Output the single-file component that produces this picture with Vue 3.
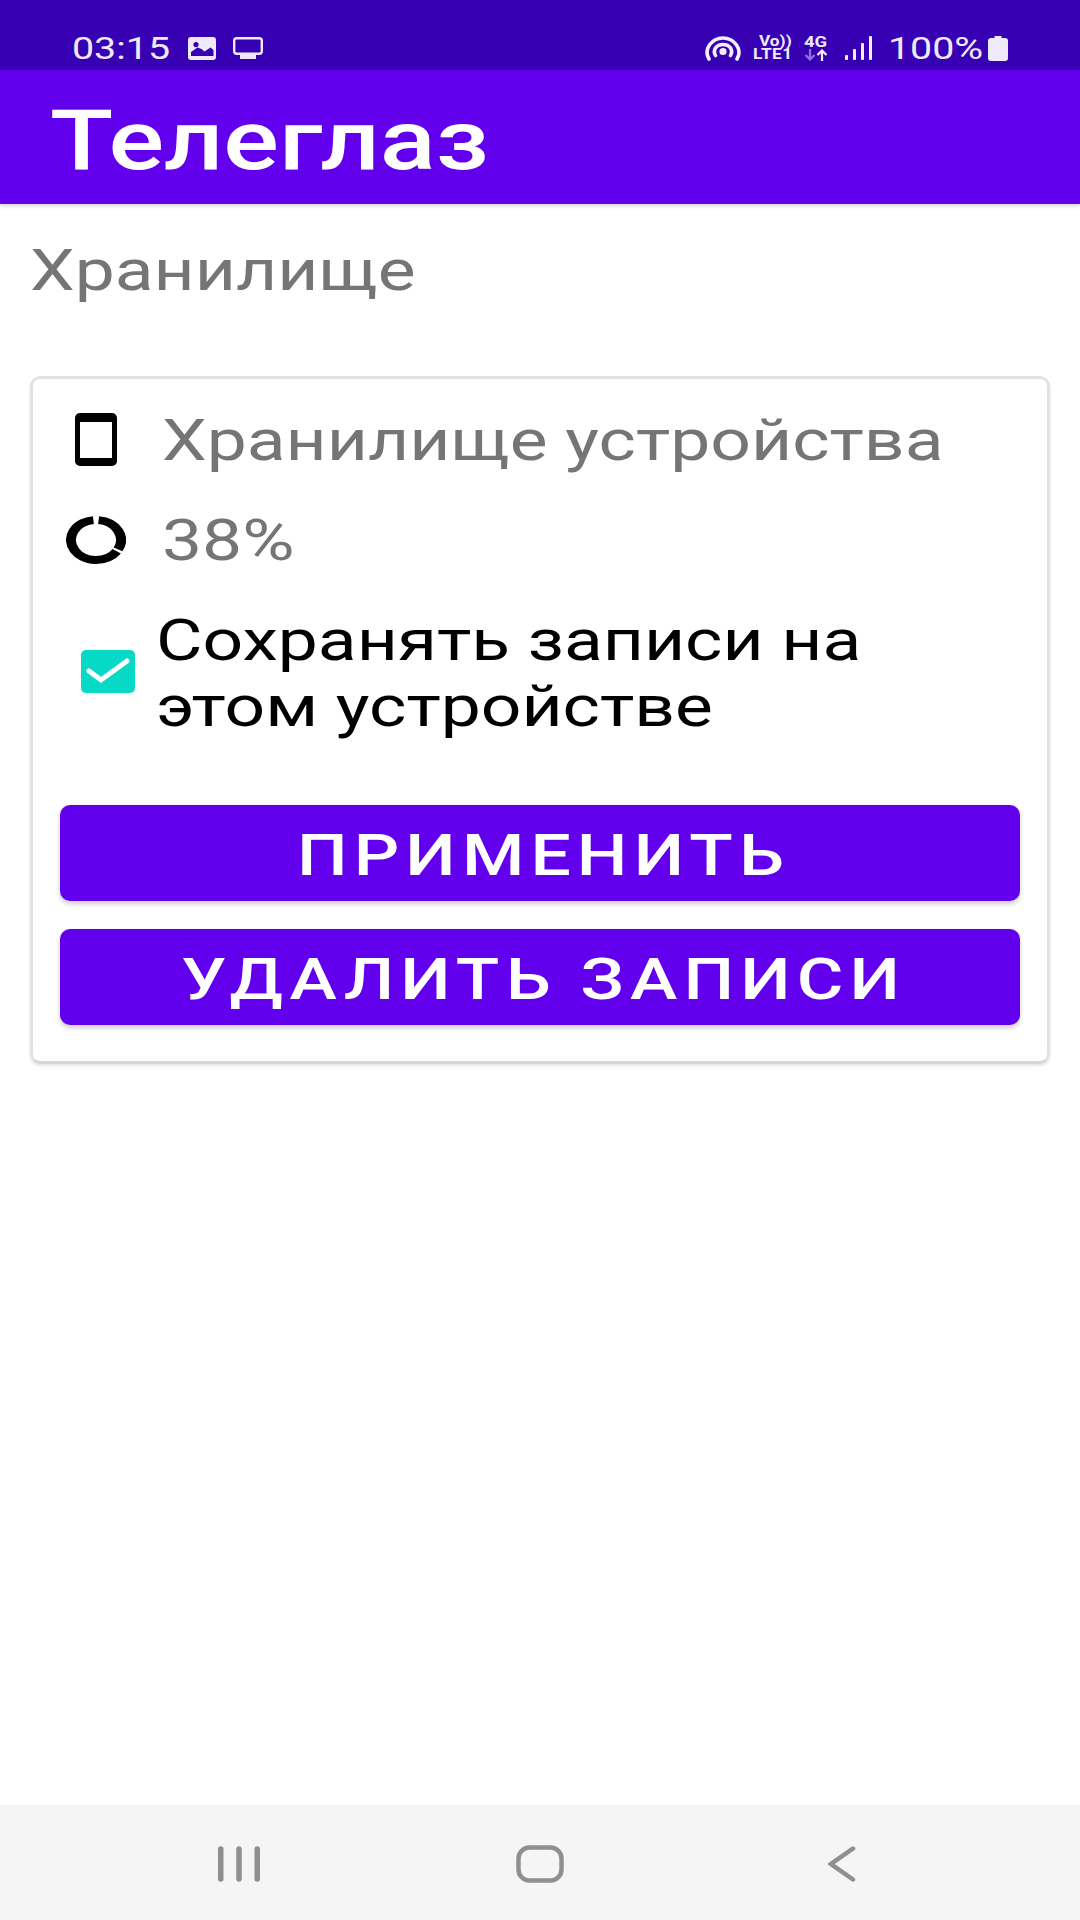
<script setup>
const buttons = ['ПРИМЕНИТЬ', 'УДАЛИТЬ ЗАПИСИ']
</script>

<template>
  <div class="screen">
    <header class="status">
      <div class="status-left">
        <span class="clock"><span class="wide">03:15</span></span>
        <svg class="ic-image" viewBox="0 0 28 23" preserveAspectRatio="none">
          <path fill="#efeafb" fill-rule="evenodd" d="M3 0h22a3 3 0 0 1 3 3v17a3 3 0 0 1-3 3H3a3 3 0 0 1-3-3V3a3 3 0 0 1 3-3zM8 5a2.6 2.6 0 1 0 0 5.2A2.6 2.6 0 0 0 8 5zM3 19h22.500v-6l-3-2.500-6 4-3-2.500-4-1.500L3 15z"/>
        </svg>
        <svg class="ic-monitor" viewBox="0 0 30 22" preserveAspectRatio="none">
          <rect x="1.200" y="1.200" width="27.600" height="15.600" rx="2.500" fill="none" stroke="#efeafb" stroke-width="2.400"/>
          <rect x="7" y="18" width="16" height="4" fill="#efeafb"/>
        </svg>
      </div>
      <div class="status-right">
        <svg class="ic-hotspot" viewBox="0 0 38 25" preserveAspectRatio="none">
          <g fill="none" stroke="#f3effc" stroke-width="3.600" stroke-linecap="round">
            <path d="M5 23C-1 13 8 2 19 2s20 11 14 21"/>
            <path d="M11.500 19.500C8.500 14 12 8.500 19 8.500S29.500 14 26.500 19.500"/>
          </g>
          <circle cx="19" cy="15.500" r="3.600" fill="#f3effc"/>
        </svg>
        <div class="volte">
          <span class="vo wide">Vo))</span>
          <span class="lte wide">LTE1</span>
        </div>
        <div class="net">
          <span class="g4 wide">4G</span>
          <svg class="ic-arrows" viewBox="0 0 24 12">
            <path d="M6 0v10M1.500 6 6 10.500 10.500 6" fill="none" stroke="#8f74dd" stroke-width="2.200"/>
            <path d="M18 12V2M13.500 6 18 1.500 22.500 6" fill="none" stroke="#f3effc" stroke-width="2.200"/>
          </svg>
        </div>
        <svg class="ic-signal" viewBox="0 0 28 24">
          <rect x="0" y="19" width="3" height="5" rx="1" fill="#f3effc"/>
          <rect x="8" y="13" width="3" height="11" rx="1" fill="#f3effc"/>
          <rect x="16" y="7" width="3" height="17" rx="1" fill="#f3effc"/>
          <rect x="24" y="0" width="3" height="24" rx="1" fill="#f3effc"/>
        </svg>
        <span class="pct"><span class="wide">100%</span></span>
        <svg class="ic-battery" viewBox="0 0 20 25" preserveAspectRatio="none">
          <path fill="#efeafb" d="M6.500 0h7v2H17a3 3 0 0 1 3 3v17a3 3 0 0 1-3 3H3a3 3 0 0 1-3-3V5a3 3 0 0 1 3-3h3.500z"/>
        </svg>
      </div>
    </header>

    <div class="appbar"><span class="appbar-title wide">Телеглаз</span></div>

    <main class="content">
      <h2 class="heading"><span class="wide">Хранилище</span></h2>

      <section class="card">
        <div class="info-row">
          <span class="icon-cell">
            <svg class="ic-tablet" viewBox="0 0 42 53" preserveAspectRatio="none">
              <path fill="#000" fill-rule="evenodd" d="M5 0h32a5 5 0 0 1 5 5v43a5 5 0 0 1-5 5H5a5 5 0 0 1-5-5V5a5 5 0 0 1 5-5zM5 9v36h32V9z"/>
            </svg>
          </span>
          <span class="info-text wide">Хранилище устройства</span>
        </div>
        <div class="info-row">
          <span class="icon-cell">
            <svg class="ic-ring" viewBox="0 0 48 48" preserveAspectRatio="none">
              <g fill="none" stroke="#000" stroke-width="8">
                <path d="M26.090 4.110A20 20 0 0 1 41.660 33.390"/>
                <path d="M40.580 35.180A20 20 0 1 1 21.910 4.110"/>
              </g>
            </svg>
          </span>
          <span class="info-text wide">38%</span>
        </div>

        <label class="check-row">
          <span class="check-box">
            <svg viewBox="0 0 54 43" preserveAspectRatio="none">
              <path d="M8 21l12 9L46 11" fill="none" stroke="#fff" stroke-width="5" stroke-linecap="round"/>
            </svg>
          </span>
          <span class="check-text">
            <span class="check-line wide">Сохранять записи на</span>
            <span class="check-line wide">этом устройстве</span>
          </span>
        </label>

        <div class="actions">
          <button v-for="b in buttons" :key="b" class="action" type="button"><span class="wide-c">{{ b }}</span></button>
        </div>
      </section>
    </main>

    <footer class="navbar">
      <svg class="ic-recents" viewBox="0 0 42 36">
        <g stroke="#8f8f8f" stroke-width="5.500" stroke-linecap="round">
          <path d="M2.750 3v30M21 3v30M39.250 3v30"/>
        </g>
      </svg>
      <svg class="ic-home" viewBox="0 0 48 38" preserveAspectRatio="none">
        <rect x="2.500" y="2.500" width="43" height="33" rx="11" fill="none" stroke="#8f8f8f" stroke-width="4.500"/>
      </svg>
      <svg class="ic-back" viewBox="0 0 28 36">
        <path d="M25 2.500 3 18l22 15.500" fill="none" stroke="#8f8f8f" stroke-width="4.500" stroke-linecap="round" stroke-linejoin="miter"/>
      </svg>
    </footer>
  </div>
</template>

<style scoped>
.screen {
  width: 1080px;
  height: 1920px;
  display: flex;
  flex-direction: column;
  background: #fff;
  font-family: Roboto, "Liberation Sans", sans-serif;
  overflow: hidden;
}
.wide {
  display: inline-block;
  transform: scaleX(1.23);
  transform-origin: left;
  white-space: nowrap;
}
.wide-c {
  display: inline-block;
  transform: scaleX(1.23);
  white-space: nowrap;
}
.status {
  height: 70px;
  flex: none;
  background: #3700b3;
  display: flex;
  justify-content: space-between;
  align-items: center;
  padding: 26px 72px 0 72px;
  box-sizing: border-box;
  color: #efeafb;
}
.status-left, .status-right { display: flex; align-items: center; }
.clock { font-size: 32px; line-height: 32px; width: 116px; }
.ic-image { width: 28px; height: 23px; margin-right: 17px; }
.ic-monitor { width: 30px; height: 22px; }
.ic-hotspot { width: 38px; height: 25px; margin-right: 11px; }
.volte { width: 39px; margin-right: 12px; display: flex; flex-direction: column; font-weight: 700; }
.vo { font-size: 14px; line-height: 13px; margin-left: 6px; }
.lte { font-size: 14px; line-height: 13px; letter-spacing: .4px; }
.net { width: 25px; margin-right: 16px; display: flex; flex-direction: column; font-weight: 700; }
.g4 { font-size: 15px; line-height: 14px; }
.ic-arrows { width: 24px; height: 12px; }
.ic-signal { width: 28px; height: 24px; margin-right: 15px; }
.pct { font-size: 32px; line-height: 32px; width: 100px; }
.ic-battery { width: 20px; height: 25px; }

.appbar {
  height: 134px;
  flex: none;
  box-sizing: border-box;
  background: #6200ee;
  box-shadow: 0 2px 4px rgba(0, 0, 0, .18);
  padding: 8px 0 0 50px;
  display: flex;
  align-items: center;
  position: relative;
}
.appbar-title {
  color: #fff;
  font-size: 84px;
  line-height: 84px;
  font-weight: 500;
  transform: scaleX(1.235);
}
.content { flex: 1; padding: 0 30px; }
.heading {
  margin: 0;
  height: 172px;
  padding-top: 31px;
  box-sizing: border-box;
  font-weight: 400;
  font-size: 58px;
  line-height: 70px;
  color: #757575;
}
.card {
  border: 3px solid #e2e2e2;
  border-bottom-color: #d6d6d6;
  border-radius: 10px;
  padding: 11px 27px 36px;
  box-shadow: 0 2px 3px rgba(0, 0, 0, .1);
}
.info-row { height: 100px; display: flex; align-items: center; }
.icon-cell { width: 72px; margin-right: 30px; display: flex; justify-content: center; flex: none; }
.ic-tablet { width: 42px; height: 53px; margin-top: -1px; }
.ic-ring { width: 60px; height: 48px; }
.info-text {
  font-size: 58px;
  line-height: 70px;
  color: #757575;
}
.check-row { display: flex; align-items: center; margin-top: 18px; height: 131px; }
.check-box {
  width: 54px;
  height: 43px;
  margin: 0 21px 4px 21px;
  background: #06d9c5;
  border-radius: 5px;
  flex: none;
  display: block;
}
.check-box svg { display: block; width: 100%; height: 100%; }
.check-text { display: flex; flex-direction: column; align-items: flex-start; }
.check-line {
  font-size: 58px;
  line-height: 65.5px;
  color: #000;
}
.actions { margin-top: 66px; display: flex; flex-direction: column; gap: 28px; }
.action {
  height: 96px;
  width: 100%;
  border: 0;
  border-radius: 10px;
  background: #6200ee;
  box-shadow: 0 3px 5px rgba(0, 0, 0, .2);
  color: #fff;
  font-family: inherit;
  font-size: 58px;
  font-weight: 500;
  letter-spacing: 5px;
  padding: 4px 0 0 7px;
}
.navbar {
  height: 115px;
  flex: none;
  background: #f5f5f5;
  display: flex;
  align-items: center;
  box-sizing: border-box;
  padding: 2px 224px 0 218px;
  justify-content: space-between;
}
.ic-recents { width: 42px; height: 36px; }
.ic-home { width: 48px; height: 38px; margin-right: 8px; }
.ic-back { width: 28px; height: 36px; }
</style>
